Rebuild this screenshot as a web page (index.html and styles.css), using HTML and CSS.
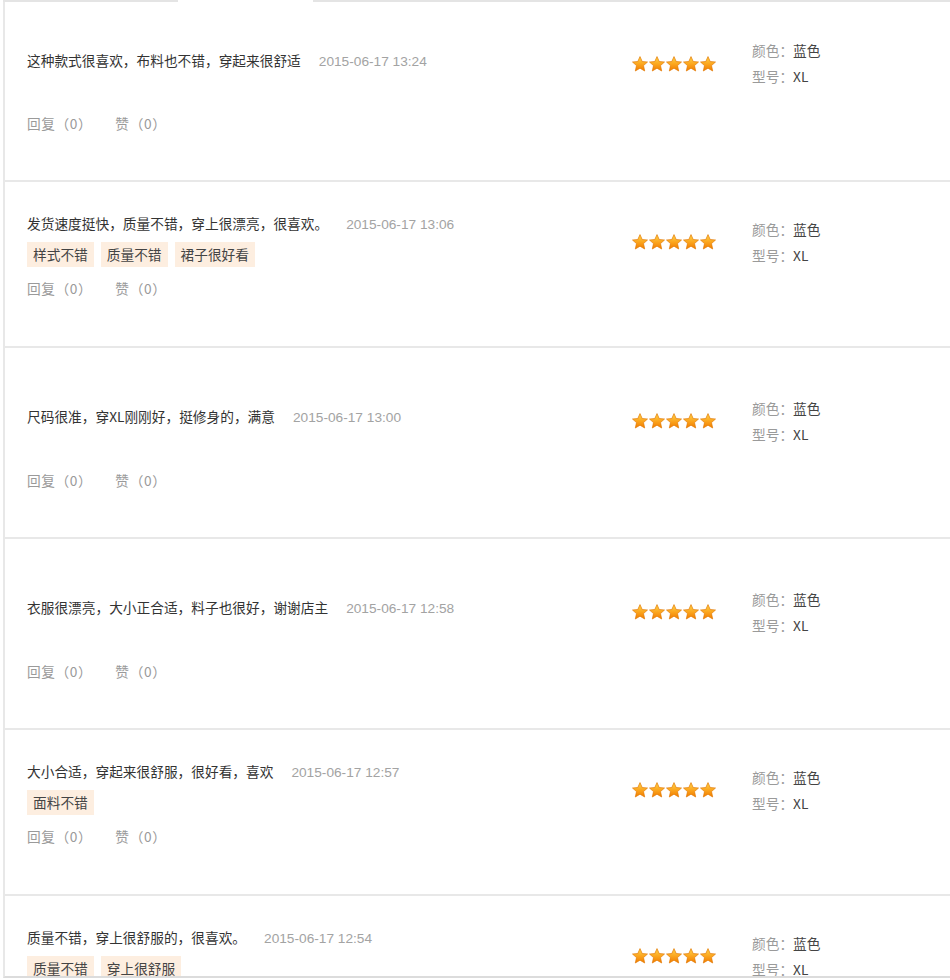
FILE: index.html
```html
<!DOCTYPE html>
<html lang="zh-CN">
<head>
<meta charset="utf-8">
<title>评价列表</title>
<link rel="stylesheet" href="styles.css">
</head>
<body>
<svg class="defs" width="0" height="0" aria-hidden="true">
  <defs>
    <linearGradient id="sg" x1="0" y1="0" x2="0" y2="1">
      <stop offset="0" stop-color="#ffd54a"/>
      <stop offset="0.55" stop-color="#fba31c"/>
      <stop offset="1" stop-color="#f07c00"/>
    </linearGradient>
    <symbol id="star" viewBox="0 0 16 16">
      <polygon points="8,0.6 10.2,5.5 15.5,6 11.5,9.6 12.7,15 8,12.2 3.3,15 4.5,9.6 0.5,6 5.8,5.5" fill="url(#sg)" stroke="#e27a06" stroke-width="0.7" stroke-linejoin="round"/>
    </symbol>
  </defs>
</svg>
<div class="panel">
  <div class="tabline"><span class="seg seg-a"></span><span class="seg-gap"></span><span class="seg seg-b"></span></div>
  <div class="list">
    <div class="review first">
      <div class="body">
        <p class="line"><span class="txt">这种款式很喜欢，布料也不错，穿起来很舒适</span><span class="date">2015-06-17 13:24</span></p>
        <p class="acts"><span class="act">回复（0）</span><span class="act">赞（0）</span></p>
      </div>
      <div class="rate"><svg class="stars" width="85" height="17" viewBox="0 0 85 17"><use href="#star" x="0" y="0" width="16" height="16"/><use href="#star" x="17" y="0" width="16" height="16"/><use href="#star" x="34" y="0" width="16" height="16"/><use href="#star" x="51" y="0" width="16" height="16"/><use href="#star" x="68" y="0" width="16" height="16"/></svg></div>
      <div class="sku"><p><span class="k">颜色：</span><span class="v">蓝色</span></p><p><span class="k">型号：</span><span class="v">XL</span></p></div>
    </div>

    <div class="review tagged">
      <div class="body">
        <p class="line"><span class="txt">发货速度挺快，质量不错，穿上很漂亮，很喜欢。</span><span class="date">2015-06-17 13:06</span></p>
        <p class="tags"><span class="tag">样式不错</span><span class="tag">质量不错</span><span class="tag">裙子很好看</span></p>
        <p class="acts"><span class="act">回复（0）</span><span class="act">赞（0）</span></p>
      </div>
      <div class="rate"><svg class="stars" width="85" height="17" viewBox="0 0 85 17"><use href="#star" x="0" y="0" width="16" height="16"/><use href="#star" x="17" y="0" width="16" height="16"/><use href="#star" x="34" y="0" width="16" height="16"/><use href="#star" x="51" y="0" width="16" height="16"/><use href="#star" x="68" y="0" width="16" height="16"/></svg></div>
      <div class="sku"><p><span class="k">颜色：</span><span class="v">蓝色</span></p><p><span class="k">型号：</span><span class="v">XL</span></p></div>
    </div>

    <div class="review plain">
      <div class="body">
        <p class="line"><span class="txt">尺码很准，穿XL刚刚好，挺修身的，满意</span><span class="date">2015-06-17 13:00</span></p>
        <p class="acts"><span class="act">回复（0）</span><span class="act">赞（0）</span></p>
      </div>
      <div class="rate"><svg class="stars" width="85" height="17" viewBox="0 0 85 17"><use href="#star" x="0" y="0" width="16" height="16"/><use href="#star" x="17" y="0" width="16" height="16"/><use href="#star" x="34" y="0" width="16" height="16"/><use href="#star" x="51" y="0" width="16" height="16"/><use href="#star" x="68" y="0" width="16" height="16"/></svg></div>
      <div class="sku"><p><span class="k">颜色：</span><span class="v">蓝色</span></p><p><span class="k">型号：</span><span class="v">XL</span></p></div>
    </div>

    <div class="review plain">
      <div class="body">
        <p class="line"><span class="txt">衣服很漂亮，大小正合适，料子也很好，谢谢店主</span><span class="date">2015-06-17 12:58</span></p>
        <p class="acts"><span class="act">回复（0）</span><span class="act">赞（0）</span></p>
      </div>
      <div class="rate"><svg class="stars" width="85" height="17" viewBox="0 0 85 17"><use href="#star" x="0" y="0" width="16" height="16"/><use href="#star" x="17" y="0" width="16" height="16"/><use href="#star" x="34" y="0" width="16" height="16"/><use href="#star" x="51" y="0" width="16" height="16"/><use href="#star" x="68" y="0" width="16" height="16"/></svg></div>
      <div class="sku"><p><span class="k">颜色：</span><span class="v">蓝色</span></p><p><span class="k">型号：</span><span class="v">XL</span></p></div>
    </div>

    <div class="review tagged">
      <div class="body">
        <p class="line"><span class="txt">大小合适，穿起来很舒服，很好看，喜欢</span><span class="date">2015-06-17 12:57</span></p>
        <p class="tags"><span class="tag">面料不错</span></p>
        <p class="acts"><span class="act">回复（0）</span><span class="act">赞（0）</span></p>
      </div>
      <div class="rate"><svg class="stars" width="85" height="17" viewBox="0 0 85 17"><use href="#star" x="0" y="0" width="16" height="16"/><use href="#star" x="17" y="0" width="16" height="16"/><use href="#star" x="34" y="0" width="16" height="16"/><use href="#star" x="51" y="0" width="16" height="16"/><use href="#star" x="68" y="0" width="16" height="16"/></svg></div>
      <div class="sku"><p><span class="k">颜色：</span><span class="v">蓝色</span></p><p><span class="k">型号：</span><span class="v">XL</span></p></div>
    </div>

    <div class="review tagged">
      <div class="body">
        <p class="line"><span class="txt">质量不错，穿上很舒服的，很喜欢。</span><span class="date">2015-06-17 12:54</span></p>
        <p class="tags"><span class="tag">质量不错</span><span class="tag">穿上很舒服</span></p>
        <p class="acts"><span class="act">回复（0）</span><span class="act">赞（0）</span></p>
      </div>
      <div class="rate"><svg class="stars" width="85" height="17" viewBox="0 0 85 17"><use href="#star" x="0" y="0" width="16" height="16"/><use href="#star" x="17" y="0" width="16" height="16"/><use href="#star" x="34" y="0" width="16" height="16"/><use href="#star" x="51" y="0" width="16" height="16"/><use href="#star" x="68" y="0" width="16" height="16"/></svg></div>
      <div class="sku"><p><span class="k">颜色：</span><span class="v">蓝色</span></p><p><span class="k">型号：</span><span class="v">XL</span></p></div>
    </div>
  </div>
</div>
</body>
</html>
```

FILE: styles.css
```css
* { box-sizing: border-box; }
html, body { margin: 0; padding: 0; background: #fff; }
body {
  font-family: "Liberation Sans", "Noto Sans CJK SC", sans-serif;
  font-size: 13.7px;
  color: #3a3a3a;
}
p { margin: 0; }
.defs { position: absolute; width: 0; height: 0; overflow: hidden; }

.panel { margin-left: 3px; }
.tabline { display: flex; height: 2px; }
.seg { background: #e4e4e4; height: 2px; }
.seg-a { width: 175px; }
.seg-gap { width: 135px; }
.seg-b { flex: 1; }

.list {
  height: 976px;
  overflow: hidden;
  border-left: 2px solid #e8e8e8;
  border-bottom: 2px solid #dcdcdc;
}

.review {
  display: flex;
  border-bottom: 2px solid #e8e8e8;
}
.review.first { height: 180px; }
.review.tagged { height: 166px; }
.review.plain { height: 191px; }

.body { width: 627px; padding-left: 22px; }
.rate { width: 120px; }
.sku { flex: 1; line-height: 25px; }

.first .body { padding-top: 48px; }
.first .rate { padding-top: 54px; }
.first .sku { padding-top: 36px; }
.first .acts { margin-top: 41px; }

.tagged .body { padding-top: 31px; }
.tagged .rate { padding-top: 52px; }
.tagged .sku { padding-top: 35px; }

.plain .body { padding-top: 58px; }
.plain .rate { padding-top: 65px; }
.plain .sku { padding-top: 48px; }
.plain .acts { margin-top: 42px; }

.line { line-height: 20px; white-space: nowrap; }
.txt { color: #333; font-family: "Noto Sans CJK SC", sans-serif; }
.date { color: #a3a3a3; margin-left: 18px; font-family: "Liberation Sans", sans-serif; }

.tags { display: flex; gap: 7px; margin-top: 7px; }
.tag {
  background: #fdeee0;
  color: #444;
  height: 25px;
  line-height: 25px;
  padding: 0 6px;
  font-family: "Noto Sans CJK SC", sans-serif;
}

.acts { line-height: 20px; color: #9a9a9a; display: flex; }
.tagged .acts { margin-top: 11px; }
.act { font-family: "Noto Sans CJK SC", sans-serif; letter-spacing: 0.6px; }
.act + .act { margin-left: 23px; }

.stars { display: block; }

.sku .k { color: #9a9a9a; font-family: "Noto Sans CJK SC", sans-serif; }
.sku .v { color: #444; font-family: "Noto Sans CJK SC", sans-serif; }
```
